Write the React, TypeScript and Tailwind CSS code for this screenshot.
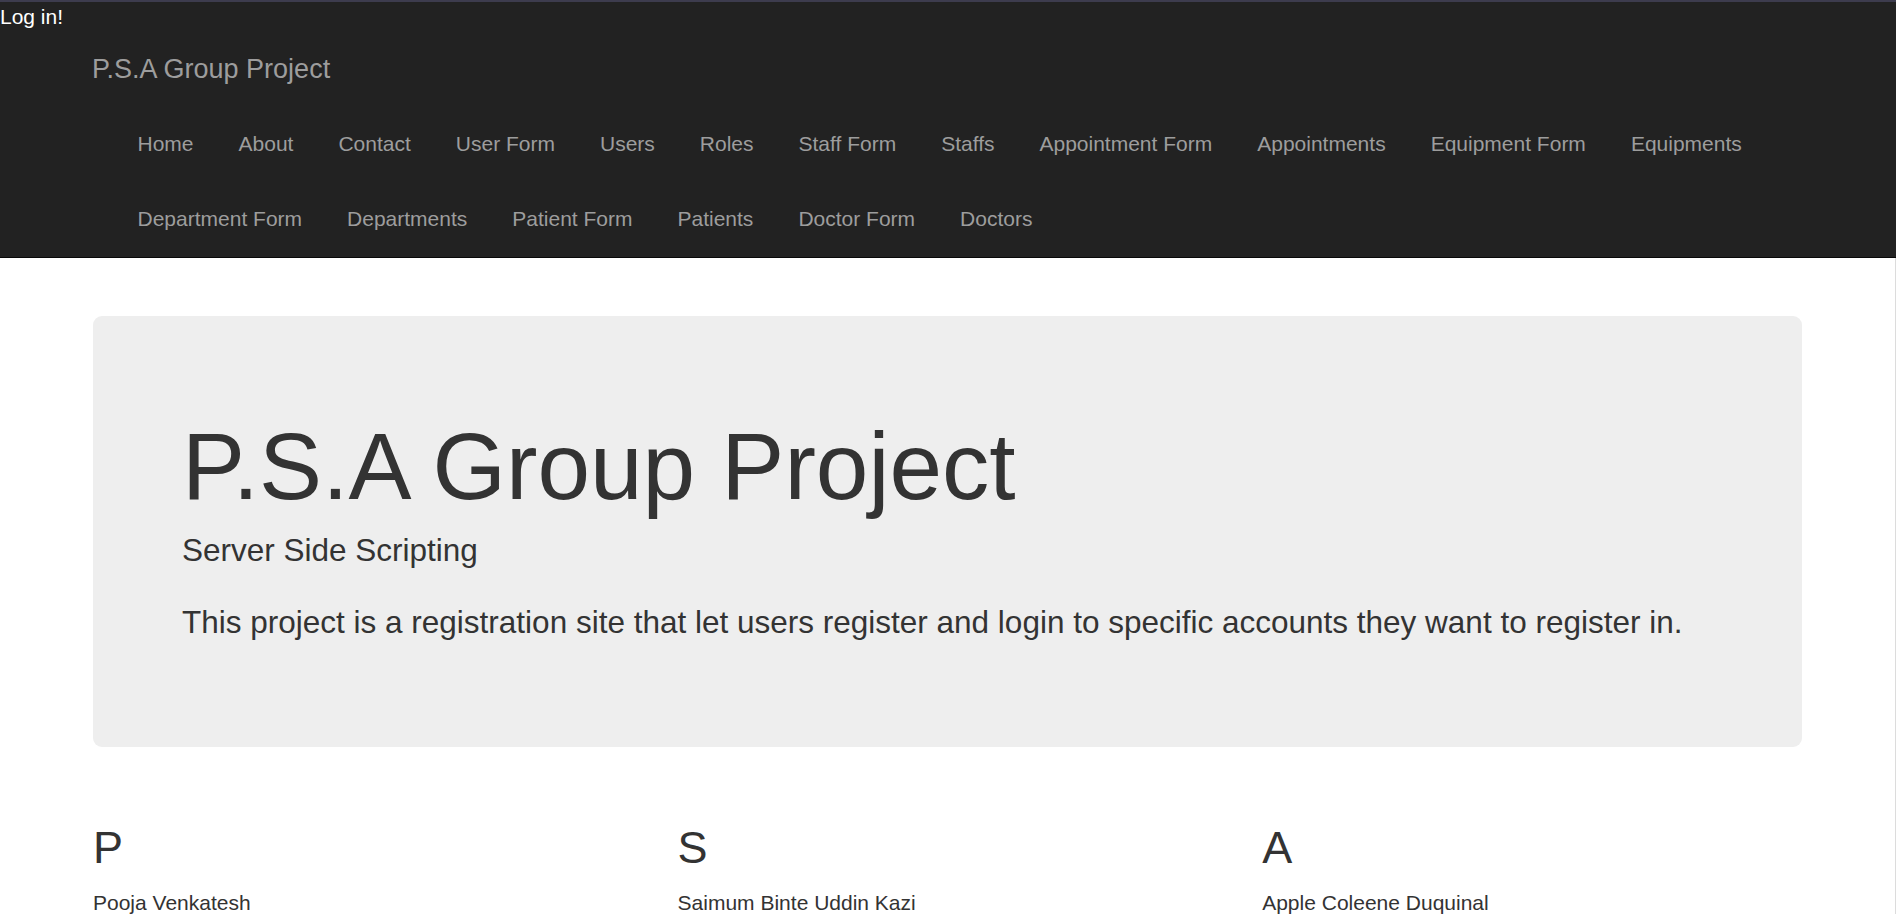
const navLinks = [
  "Home",
  "About",
  "Contact",
  "User Form",
  "Users",
  "Roles",
  "Staff Form",
  "Staffs",
  "Appointment Form",
  "Appointments",
  "Equipment Form",
  "Equipments",
  "Department Form",
  "Departments",
  "Patient Form",
  "Patients",
  "Doctor Form",
  "Doctors",
]

const members = [
  { letter: "P", name: "Pooja Venkatesh" },
  { letter: "S", name: "Saimum Binte Uddin Kazi" },
  { letter: "A", name: "Apple Coleene Duquinal" },
]

export default function App() {
  return (
    <div className="min-h-screen bg-white font-['Liberation_Sans',Arial,Helvetica,sans-serif] text-[#333]">

      {/* Top bar + navbar */}
      <header className="bg-[#222] border-t-2 border-[#3d3c4e]">
        <div className="h-[30px] text-[21px] leading-[29px] text-white">
          Log in!
        </div>

        <nav className="border-b border-[#080808]">
          <div className="h-[75px] flex items-center pl-[92px]">
            <a href="#" className="text-[27px] leading-[29px] text-[#9d9d9d]">
              P.S.A Group Project
            </a>
          </div>

          <ul className="ml-[115px] w-[1666px] flex flex-wrap">
            {navLinks.map((link) => (
              <li key={link}>
                <a
                  href="#"
                  className="block h-[75px] px-[22.5px] text-[21px] leading-[74px] text-[#9d9d9d]"
                >
                  {link}
                </a>
              </li>
            ))}
          </ul>
        </nav>
      </header>

      <main className="pt-[58px] border-r border-[#dcdcdc]">

        {/* Jumbotron */}
        <div className="mx-[93px] rounded-[9px] bg-[#eee] px-[89px] pt-[100px] pb-[103.5px]">
          <h1 className="text-[94.5px] leading-[101px] font-normal">
            P.S.A Group Project
          </h1>
          <p className="mt-[10.5px] text-[31.5px] leading-[44px]">
            Server Side Scripting
          </p>
          <p className="mt-[28px] text-[31.5px] leading-[44px]">
            This project is a registration site that let users register and login to specific accounts they want to register in.
          </p>
        </div>

        {/* Members */}
        <div className="mt-[77px] pl-[93px] flex">
          {members.map((m) => (
            <div key={m.letter} className="w-[584.6px]">
              <h2 className="text-[45px] leading-[48px] font-normal">{m.letter}</h2>
              <p className="mt-[15.5px] text-[21px] leading-[29px]">{m.name}</p>
            </div>
          ))}
        </div>

      </main>
    </div>
  )
}
